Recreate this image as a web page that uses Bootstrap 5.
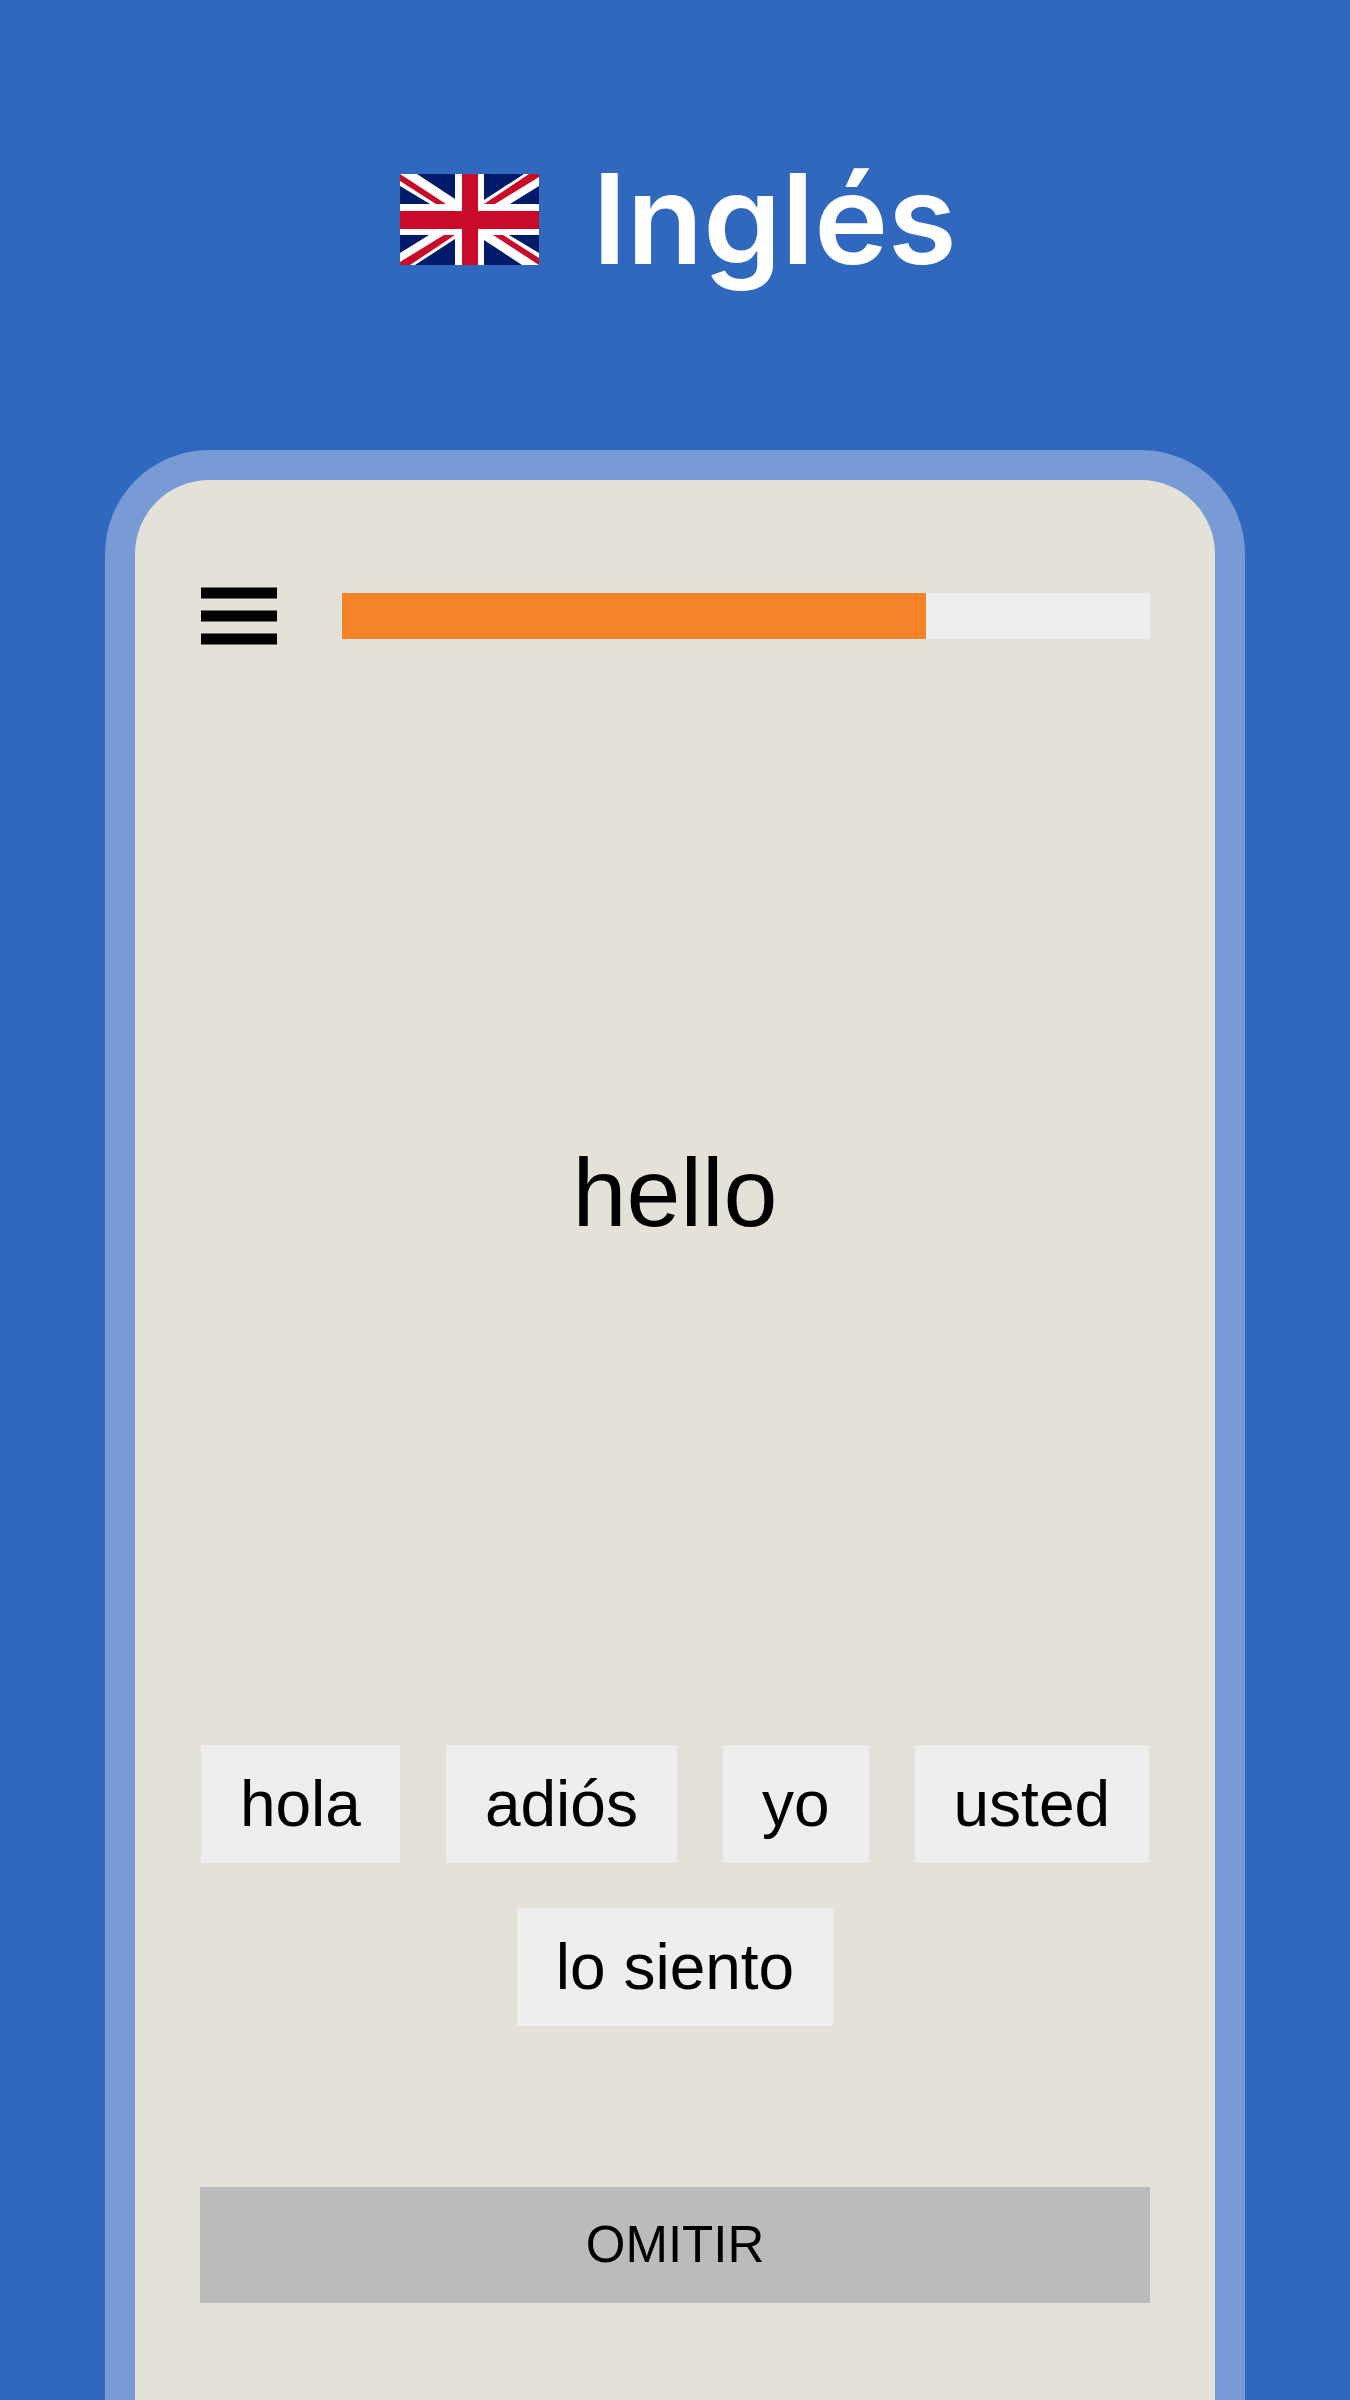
<!DOCTYPE html>
<html lang="es">
<head>
<meta charset="utf-8">
<meta name="viewport" content="width=device-width, initial-scale=1">
<title>Inglés</title>
<link href="https://cdn.jsdelivr.net/npm/bootstrap@5.3.0/dist/css/bootstrap.min.css" rel="stylesheet">
<style>
  body { background: #3068bf; color: #000; font-family: "Liberation Sans", Arial, sans-serif; }
  .hero { height: 450px; gap: 53px; padding: 0 0 12px 7px; }
  .hero h1 { font-family: Inter, Roboto, sans-serif; font-weight: 600; font-size: 125px; line-height: 150px; }
  .phone { margin: 0 105px; border: 30px solid #789bd5; border-bottom: 0; border-radius: 104px 104px 0 0; background: #e4e1d9; padding: 107px 65px 97px; }
  .topbar { gap: 65px; }
  .menu-btn { border: 0; background: none; padding: 0 0 0 1px; }
  .lesson-progress { height: 46px; border-radius: 0; background: #eee; }
  .lesson-progress .progress-bar { background: #f58229; }
  .prompt { font-size: 97px; line-height: 110px; }
  .choices { gap: 45px 46px; margin-bottom: 161px; }
  .choice, .skip { --bs-btn-border-width: 0; --bs-btn-border-radius: 0; --bs-btn-color: #000; --bs-btn-hover-color: #000; }
  .choice { --bs-btn-bg: #eee; --bs-btn-hover-bg: #e2e2e2; --bs-btn-font-size: 64px; --bs-btn-line-height: 74px; --bs-btn-padding-x: 39px; --bs-btn-padding-y: 22px; }
  .skip { --bs-btn-bg: #bbb; --bs-btn-hover-bg: #aaa; --bs-btn-font-size: 51px; --bs-btn-line-height: 60px; --bs-btn-padding-y: 28px; }
</style>
</head>
<body class="min-vh-100 d-flex flex-column">
<header class="hero d-flex align-items-center justify-content-center">
  <svg width="139" height="91" viewBox="0 0 139 91" role="img" aria-label="Reino Unido">
    <path fill="#fff" d="M0 0h139v91H0z"/>
    <g id="half">
      <path fill="#001b69" d="M17 0h38v25zM0 12v18h30zM84 0h40L84 26zM139 12v18h-29z"/>
      <path fill="#c90a29" d="M0 0v7l36 23h10zM129 0h10v3L95 30H84z"/>
    </g>
    <use href="#half" transform="rotate(180 69.5 45.5)"/>
    <path fill="#c90a29" d="M62 0h16v91H62zM0 37h139v18H0z"/>
  </svg>
  <h1 class="text-white mb-0">Inglés</h1>
</header>
<main class="phone flex-grow-1 d-flex flex-column">
  <div class="topbar d-flex align-items-center">
    <button type="button" class="menu-btn d-flex" aria-label="Menú">
      <svg width="76" height="58" viewBox="0 0 76 58" aria-hidden="true"><path d="M0 .5h76v11H0zM0 23.5h76v11H0zM0 46.5h76v11H0z"/></svg>
    </button>
    <div class="progress lesson-progress flex-grow-1" role="progressbar" aria-label="Progreso" aria-valuenow="72" aria-valuemin="0" aria-valuemax="100">
      <div class="progress-bar" style="width: 72.3%"></div>
    </div>
  </div>
  <div class="flex-grow-1 d-flex align-items-center justify-content-center">
    <p class="prompt mb-1">hello</p>
  </div>
  <div class="choices d-flex flex-wrap justify-content-center">
    <button type="button" class="btn choice">hola</button>
    <button type="button" class="btn choice">adiós</button>
    <button type="button" class="btn choice">yo</button>
    <button type="button" class="btn choice">usted</button>
    <button type="button" class="btn choice">lo siento</button>
  </div>
  <button type="button" class="btn skip w-100">OMITIR</button>
</main>
<script src="https://cdn.jsdelivr.net/npm/bootstrap@5.3.0/dist/js/bootstrap.bundle.min.js"></script>
</body>
</html>
